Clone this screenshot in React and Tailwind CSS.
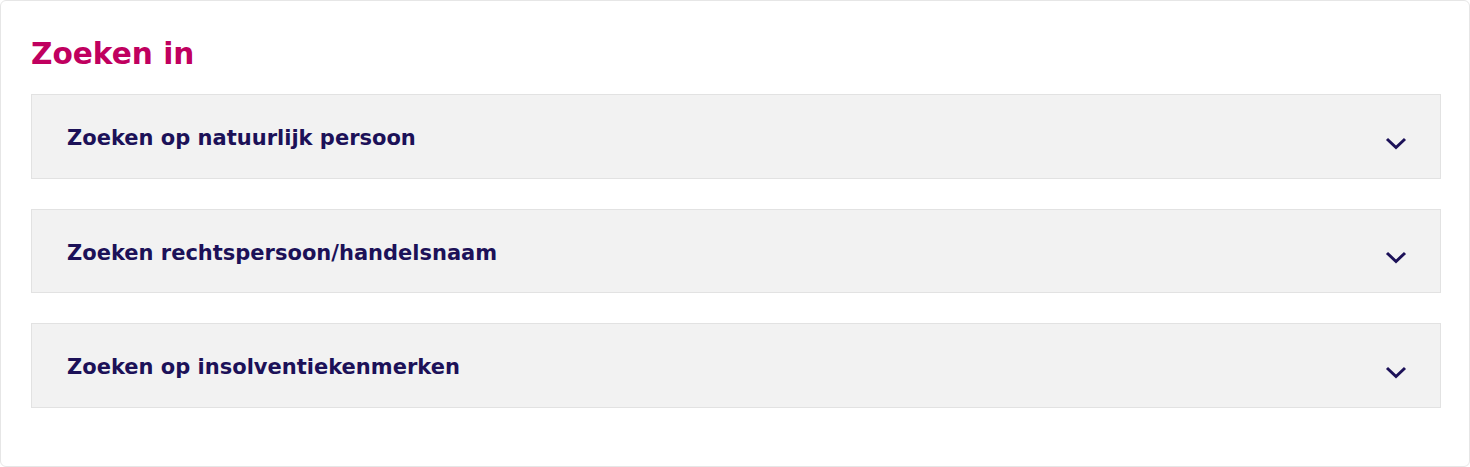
// zoekformulier: drie inklapbare secties
import { useState } from "react";

const secties = [
    "Zoeken op natuurlijk persoon",
    "Zoeken rechtspersoon/handelsnaam",
    "Zoeken op insolventiekenmerken",
];

function Chevron() {
    return (
        <svg width="22" height="13" viewBox="0 0 22 13" fill="none" className="mt-[14px]">
            <path d="M2 2 L11 10.5 L20 2" stroke="#1c1158" strokeWidth="3" />
        </svg>
    );
}

export default function App() {
    // welke sectie open staat
    const [open, setOpen] = useState(null);

    return (
        <div className="h-[467px] w-[1470px] bg-white font-['DejaVu_Sans',sans-serif]">
            <div className="h-full rounded-[6px] border border-[#e6e6e6] pl-[30px] pr-[28px] pt-[35px]">
                <h2 className="text-[29.6px] leading-[36px] font-bold text-[#c0005f] mb-[22px]">Zoeken in</h2>
                <div className="flex flex-col gap-[30px]">
                    {secties.map((titel, i) => (
                        <button
                            key={titel}
                            type="button"
                            onClick={() => setOpen(open === i ? null : i)}
                            className="flex h-[84.6px] w-full items-center justify-between border border-[#e2e2e2] bg-[#f2f2f2] pl-[35px] pr-[33px] text-left"
                        >
                            <span className="pt-[5px] text-[21px] leading-[25px] font-bold text-[#1c1158]">{titel}</span>
                            <Chevron />
                        </button>
                    ))}
                </div>
            </div>
        </div>
    );
}
